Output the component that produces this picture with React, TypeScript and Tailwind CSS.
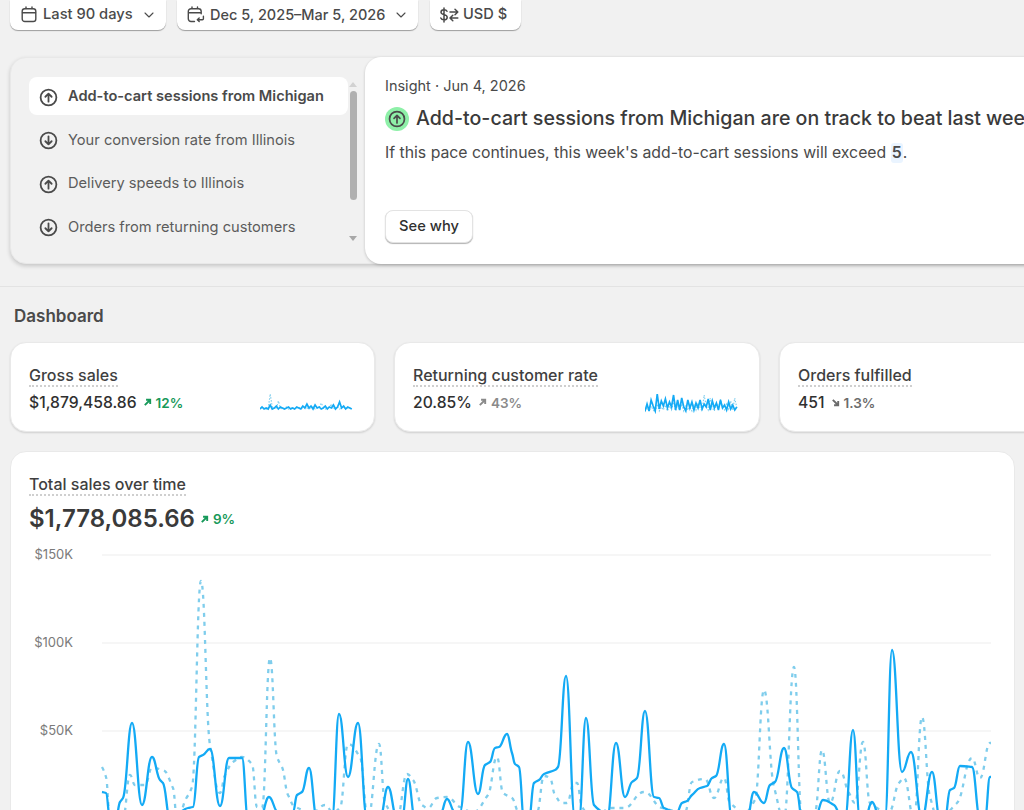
import type { ReactNode } from "react";
import { ChevronDown } from "lucide-react";

type Pt = [number, number];

// chart points are in page coordinates, the svg viewBox lines up with them
const solid: Pt[] = [
  [102, 792], [106, 793], [110, 818], [116, 818], [120, 802], [123, 798], [132, 723], [142, 805], [152, 757], [160, 780],
  [163, 783], [170, 818], [188, 808], [193, 807], [199, 757], [203, 755], [210, 749], [220, 806], [229, 758], [242, 758],
  [248, 818], [260, 818], [269, 797], [278, 812], [293, 812], [297, 795], [302, 792], [309, 768], [317, 818], [332, 818],
  [339, 714], [348, 777], [358, 723], [367, 818], [380, 818], [388, 787], [397, 818], [402, 818], [408, 779], [415, 818],
  [440, 815], [447, 799], [455, 812], [460, 812], [468, 742], [478, 794], [485, 765], [490, 762], [495, 748], [499, 747],
  [507, 734], [512, 753], [515, 764], [519, 767], [524, 818], [529, 818], [534, 783], [539, 780], [544, 774], [555, 770],
  [558, 767], [566, 676], [575, 818], [579, 818], [586, 718], [594, 805], [602, 812], [607, 818], [616, 743], [625, 797],
  [632, 782], [637, 778], [645, 711], [654, 797], [659, 798], [664, 808], [677, 812], [682, 803], [687, 801], [692, 795],
  [700, 788], [707, 786], [712, 778], [716, 776], [724, 744], [732, 818], [747, 818], [754, 792], [764, 803], [770, 785],
  [775, 782], [784, 748], [792, 788], [797, 792], [802, 818], [815, 818], [823, 800], [834, 805], [842, 818], [845, 818],
  [853, 730], [860, 818], [865, 818], [872, 802], [880, 818], [885, 818], [892, 650], [902, 772], [911, 752], [922, 818],
  [932, 772], [940, 818], [945, 818], [950, 790], [954, 788], [960, 766], [972, 767], [980, 818], [985, 818], [990, 777], [991, 777],
];

const dashed: Pt[] = [
  [102, 767], [106, 777], [110, 818], [123, 818], [130, 775], [135, 785], [145, 785], [152, 768], [163, 770], [173, 788],
  [177, 818], [187, 797], [192, 787], [201, 581], [210, 745], [220, 793], [225, 775], [233, 762], [242, 757], [252, 764],
  [257, 807], [262, 808], [270, 658], [277, 757], [282, 767], [288, 795], [295, 807], [313, 812], [325, 805], [333, 812],
  [340, 808], [348, 744], [360, 757], [368, 818], [379, 744], [385, 803], [397, 818], [407, 774], [413, 780], [422, 805],
  [428, 808], [437, 798], [447, 797], [460, 807], [473, 812], [488, 795], [497, 757], [503, 793], [512, 798], [519, 812],
  [537, 812], [544, 776], [550, 778], [555, 795], [562, 803], [567, 803], [574, 783], [577, 783], [582, 807], [592, 818],
  [612, 808], [624, 808], [644, 792], [662, 808], [685, 812], [692, 782], [705, 779], [714, 798], [724, 778], [730, 803],
  [745, 812], [755, 800], [764, 690], [774, 787], [784, 818], [794, 667], [802, 818], [815, 812], [822, 750], [830, 803],
  [840, 771], [849, 793], [855, 803], [863, 742], [870, 803], [889, 812], [899, 783], [904, 778], [914, 818], [922, 717],
  [930, 797], [938, 818], [957, 803], [972, 758], [980, 778], [990, 743], [991, 743],
];

const grossSolid = [17, 15, 17, 16, 17, 13, 17, 16, 14, 17, 15, 16, 17, 16, 15, 17, 16, 17, 15, 16, 17, 14, 16, 12, 16, 14, 17, 13, 16, 15, 17, 16, 14, 17, 15, 16, 13, 17, 15, 10, 16, 14, 17, 15, 16, 17];
const grossDashed = [17, 16, 16, 17, 17, 2, 15, 16, 17, 9, 16, 17, 16, 15, 17, 16, 16, 17, 16, 15, 17, 16, 15, 16, 17, 16, 15, 17, 16, 16, 11, 15, 17, 16, 15, 12, 17, 16, 15, 17, 16, 15, 17, 16, 16, 17];
const returningSolid = [19, 12, 19, 8, 14, 19, 2, 17, 9, 14, 7, 16, 10, 15, 3, 18, 8, 18, 6, 15, 19, 8, 16, 10, 18, 11, 16, 8, 17, 12, 15, 7, 18, 9, 16, 11, 18, 8, 16, 13, 18, 10, 17, 13, 18, 15];
const returningDashed = [20, 16, 19, 14, 18, 20, 12, 19, 15, 18, 13, 19, 14, 18, 10, 19, 13, 18, 12, 19, 14, 18, 15, 19, 13, 18, 11, 16, 19, 3, 14, 18, 6, 16, 19, 11, 17, 7, 16, 18, 12, 17, 9, 18, 6, 16];

// monotone cubic through the points, handles pulled out a bit so peaks stay round
function smoothPath(pts: Pt[]) {
  const n = pts.length;
  const slopes: number[] = [];
  for (let i = 0; i < n - 1; i++) {
    slopes.push((pts[i + 1][1] - pts[i][1]) / (pts[i + 1][0] - pts[i][0]));
  }
  const tangents = pts.map((_, i) => {
    if (i === 0) return slopes[0];
    if (i === n - 1) return slopes[n - 2];
    if (slopes[i - 1] * slopes[i] <= 0) return 0;
    return (2 * slopes[i - 1] * slopes[i]) / (slopes[i - 1] + slopes[i]);
  });
  let d = `M${pts[0][0]} ${pts[0][1]}`;
  for (let i = 0; i < n - 1; i++) {
    const dx = pts[i + 1][0] - pts[i][0];
    const cx = dx * 0.45;
    const cy = dx * 0.33;
    d += `C${pts[i][0] + cx} ${pts[i][1] + tangents[i] * cy} ${pts[i + 1][0] - cx} ${pts[i + 1][1] - tangents[i + 1] * cy} ${pts[i + 1][0]} ${pts[i + 1][1]}`;
  }
  return d;
}

function CircleArrow({ down = false, className = "w-[19px] h-[19px]" }: { down?: boolean; className?: string }) {
  return (
    <svg viewBox="0 0 20 20" fill="none" stroke="#4a4a4a" strokeWidth="1.9" strokeLinecap="round" strokeLinejoin="round" className={className}>
      <circle cx="10" cy="10" r="8.3" />
      {down ? <path d="M10 5.6v8.4M6.7 10.8l3.3 3.3 3.3-3.3" /> : <path d="M10 14.4V6M6.7 9.2 10 5.9l3.3 3.3" />}
    </svg>
  );
}

function CalendarIcon() {
  return (
    <svg viewBox="0 0 16 17" fill="none" stroke="#4a4a4a" strokeWidth="1.4" strokeLinecap="round" className="w-4 h-[17px]">
      <rect x="1.2" y="2.7" width="13.6" height="12.8" rx="2.6" />
      <path d="M1.5 6.8h13M5 1v1.6M11 1v1.6" />
    </svg>
  );
}

function CalendarCompareIcon() {
  return (
    <svg viewBox="0 0 18 17" fill="none" stroke="#4a4a4a" strokeWidth="1.4" strokeLinecap="round" strokeLinejoin="round" className="w-[18px] h-[17px]">
      <path d="M7.5 15.5H4a2.7 2.7 0 0 1-2.7-2.7V5.4A2.7 2.7 0 0 1 4 2.7h7.5a2.7 2.7 0 0 1 2.7 2.7v2.4M1.5 6.8h12.5M5 1v1.6M10.5 1v1.6" />
      <path d="M16.4 10.2v2.6a1 1 0 0 1-1 1H10.5M12.2 12l-1.9 1.8 1.9 1.8" />
    </svg>
  );
}

function CurrencyIcon() {
  return (
    <svg viewBox="0 0 20 16" fill="none" stroke="#4a4a4a" strokeWidth="1.5" strokeLinecap="round" strokeLinejoin="round" className="w-5 h-4">
      <path d="M8 4.3C7.5 3.2 6.6 2.8 5 2.8c-1.7 0-3 .8-3 2.4 0 3.2 6.2 1.6 6.2 5 0 1.6-1.4 2.6-3.2 2.6-1.7 0-2.7-.6-3.2-1.8M5 1v14" />
      <path d="M11 5h7.6M16 2.2 18.8 5 16 7.8M18.8 11h-7.6M13.8 8.2 11 11l2.8 2.8" />
    </svg>
  );
}

function Trend({ dir, value, color }: { dir: "up" | "down"; value: string; color: string }) {
  return (
    <span className="flex items-center gap-[4px] text-[13.5px] font-semibold" style={{ color }}>
      <svg viewBox="0 0 10 10" fill="none" stroke={color} strokeWidth="2.1" className="w-[9px] h-[9px]">
        {dir === "up" ? <path d="M2 8 7.5 2.5M3.4 2h4.6v4.6" /> : <path d="M2 2l5.5 5.5M3.4 8h4.6V3.4" />}
      </svg>
      {value}
    </span>
  );
}

function Sparkline({ main, prev }: { main: number[]; prev: number[] }) {
  const line = (arr: number[]) => arr.map((y, i) => `${i * 2.04} ${y}`).join(" ");
  return (
    <svg viewBox="0 0 94 22" className="w-[94px] h-[22px] -mb-[1px]" fill="none">
      <polyline points={line(prev)} stroke="#7fcdec" strokeWidth="1.1" strokeDasharray="1.5 1.5" />
      <polyline points={line(main)} stroke="#13aaf5" strokeWidth="1.7" />
    </svg>
  );
}

function Metric({ title, value, trend, spark, width }: { title: string; value: string; trend: ReactNode; spark?: ReactNode; width: string }) {
  return (
    <div className={`${width} shrink-0 h-[90px] bg-white rounded-2xl border border-[#e9e9e9] shadow-[0_1px_2px_rgba(0,0,0,0.14)] pl-[18px] pr-[20px] pb-[18px] flex justify-between items-end`}>
      <div>
        <div className="w-fit text-base leading-[20px] font-medium text-[#3f3f3f] border-b-2 border-dotted border-[#cfcfcf]">{title}</div>
        <div className="flex items-center gap-[6px] mt-[6px]">
          <span className="text-[15.7px] leading-[20px] font-medium text-[#303030]">{value}</span>
          {trend}
        </div>
      </div>
      {spark}
    </div>
  );
}

const insights = [
  { label: "Your conversion rate from Illinois", down: true },
  { label: "Delivery speeds to Illinois", down: false },
  { label: "Orders from returning customers", down: true },
];

export default function App() {
  return (
    <div className="w-[1024px] h-[810px] overflow-hidden bg-[#f1f1f1] text-[#303030] font-['Inter',sans-serif]">
      <div className="flex pl-[10px] h-[30px]">
        <button className="w-[156px] h-[30px] pb-[1px] bg-white rounded-b-lg shadow-[0_1px_1px_rgba(0,0,0,0.35)] flex items-center pl-[11px] gap-[6px] text-[14.7px] font-medium text-[#4a4a4a]">
          <CalendarIcon />
          Last 90 days
          <ChevronDown className="w-[16px] h-[16px] ml-[2px]" strokeWidth={1.6} />
        </button>
        <button className="ml-[11px] w-[241px] h-[30px] pb-[1px] bg-white rounded-b-lg shadow-[0_1px_1px_rgba(0,0,0,0.35)] flex items-center pl-[10px] gap-[5px] text-[14.5px] font-medium text-[#4a4a4a]">
          <CalendarCompareIcon />
          Dec 5, 2025–Mar 5, 2026
          <ChevronDown className="w-[16px] h-[16px] ml-[3px]" strokeWidth={1.6} />
        </button>
        <button className="ml-[12px] w-[91px] h-[30px] pb-[1px] bg-white rounded-b-lg shadow-[0_1px_1px_rgba(0,0,0,0.35)] flex items-center pl-[9px] gap-[4px] text-[14.6px] font-medium text-[#4a4a4a]">
          <CurrencyIcon />
          USD $
        </button>
      </div>

      <div className="ml-[10px] mt-[27px] w-[1100px] h-[207px] flex rounded-2xl border border-[#e8e8e8] bg-[#f1f1f1] shadow-[0_2px_4px_rgba(0,0,0,0.18)]">
        <div className="w-[354px] shrink-0 flex pl-[18px] pt-[19px]">
          <div className="w-[319px]">
            <div className="h-[38px] pt-[2px] bg-white rounded-lg flex items-center pl-[10px] gap-[10px] text-[14.6px] font-semibold text-[#4a4a4a]">
              <CircleArrow />
              Add-to-cart sessions from Michigan
            </div>
            {insights.map((row) => (
              <div key={row.label} className="h-[38px] pt-[2px] mt-[5.6px] rounded-lg flex items-center pl-[10px] gap-[10px] text-[14.65px] text-[#5c5c5c]">
                <CircleArrow down={row.down} />
                {row.label}
              </div>
            ))}
          </div>
          <div className="ml-[1px] w-[8px] flex flex-col items-center">
            <svg viewBox="0 0 8 5" className="w-2 h-[5px] mt-[5px]" fill="#d2d2d2"><path d="M4 0l4 5H0z" /></svg>
            <div className="w-[7px] h-[109px] mt-[4px] rounded-full bg-[#b0b0b0]" />
            <svg viewBox="0 0 8 5" className="w-2 h-[5px] mt-[36px]" fill="#a8a8a8"><path d="M4 5l4-5H0z" /></svg>
          </div>
        </div>

        <div className="flex-1 -my-[1px] bg-white rounded-l-2xl shadow-[0_1px_3px_rgba(0,0,0,0.2)] pl-[20px] pt-[19px]">
          <div className="text-[14.5px] leading-[20px] text-[#4a4a4a]">Insight · Jun 4, 2026</div>
          <div className="flex items-center gap-[7px] mt-[9px] h-[28px] whitespace-nowrap">
            <span className="w-6 h-6 rounded-full bg-[#8ef0a8] flex items-center justify-center">
              <CircleArrow className="w-[18px] h-[18px]" />
            </span>
            <span className="text-[19.6px] font-medium text-[#3a3a3a]">Add-to-cart sessions from Michigan are on track to beat last week</span>
          </div>
          <p className="mt-[10px] text-[15.8px] leading-[20px] text-[#4a4a4a]">
            If this pace continues, this week's add-to-cart sessions will exceed{" "}
            <span className="inline-block bg-[#eaf4ff] rounded-[3px] px-[1px] font-semibold">5</span>.
          </p>
          <button className="mt-[47px] w-[88px] h-[33px] bg-white rounded-lg border border-[#e3e3e3] shadow-[0_1px_1px_rgba(0,0,0,0.3)] text-[14.7px] font-medium text-[#303030]">
            See why
          </button>
        </div>
      </div>

      <div className="mt-[22px] border-t border-[#e3e3e3] pl-[14px] pt-[19px] text-[17px] leading-[20px] font-semibold text-[#4a4a4a]">Dashboard</div>

      <div className="flex gap-[19px] pl-[10px] mt-[16px] w-[1200px]">
        <Metric width="w-[365px]" title="Gross sales" value="$1,879,458.86" trend={<Trend dir="up" value="12%" color="#17995a" />} spark={<Sparkline main={grossSolid} prev={grossDashed} />} />
        <Metric width="w-[366px]" title="Returning customer rate" value="20.85%" trend={<Trend dir="up" value="43%" color="#8a8a8a" />} spark={<Sparkline main={returningSolid} prev={returningDashed} />} />
        <Metric width="w-[365px]" title="Orders fulfilled" value="451" trend={<Trend dir="down" value="1.3%" color="#6b6b6b" />} />
      </div>

      <div className="ml-[10px] mt-[19px] w-[1005px] h-[400px] bg-white rounded-2xl border border-[#e9e9e9] pl-[18px] pt-[22px]">
        <div className="w-fit text-base leading-[20px] font-medium text-[#3f3f3f] border-b-2 border-dotted border-[#cfcfcf]">Total sales over time</div>
        <div className="flex items-center gap-[5px] mt-[7px]">
          <span className="text-2xl leading-[32px] font-semibold text-[#3a3a3a]">$1,778,085.66</span>
          <Trend dir="up" value="9%" color="#17995a" />
        </div>
        <svg viewBox="29 541 970 270" className="w-[970px] h-[270px] mt-[6px]" fill="none">
          {[555, 643, 731].map((y) => (
            <line key={y} x1="102" x2="991" y1={y} y2={y} stroke="#ededed" strokeWidth="1" />
          ))}
          <text x="73" y="559" textAnchor="end" fontSize="13" fill="#7a7a7a">$150K</text>
          <text x="73" y="647" textAnchor="end" fontSize="13" fill="#7a7a7a">$100K</text>
          <text x="73" y="735" textAnchor="end" fontSize="13" fill="#7a7a7a">$50K</text>
          <path d={smoothPath(dashed)} stroke="#7fcdec" strokeWidth="2.3" strokeDasharray="4 5" />
          <path d={smoothPath(solid)} stroke="#13aaf5" strokeWidth="2.3" />
        </svg>
      </div>
    </div>
  );
}
